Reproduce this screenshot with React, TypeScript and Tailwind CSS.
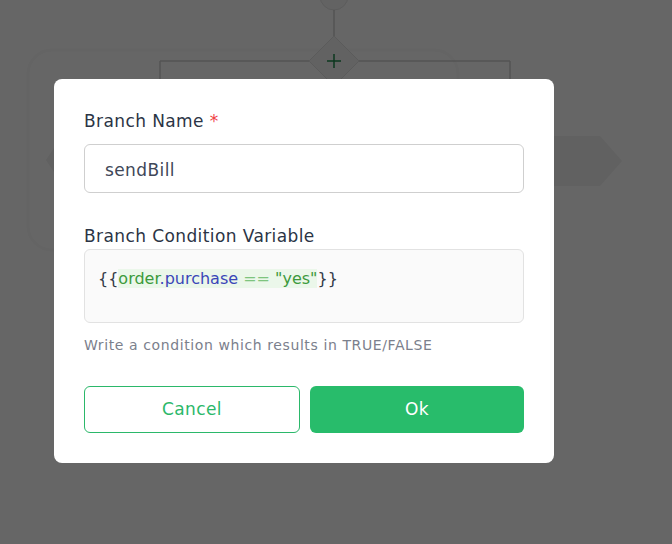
function FlowBackground() {
  return (
    <svg
      className="absolute inset-0"
      width="672"
      height="544"
      viewBox="0 0 672 544"
    >
      <rect width="672" height="544" fill="#ffffff" />
      <rect x="28" y="50" width="430" height="200" rx="24" fill="none" stroke="#fafafa" strokeWidth="3" />
      <circle cx="334" cy="-4" r="14" fill="#f7f7f7" stroke="#e6e6e6" />
      <path d="M334 10 V36" stroke="#cfcfcf" strokeWidth="1.5" />
      <path d="M160 61 H510 M160 61 V100 M510 61 V100" stroke="#cfcfcf" strokeWidth="1.5" fill="none" />
      <path d="M334 36 L359 61 L334 86 L309 61 Z" fill="#f4f4f4" stroke="#e3e3e3" />
      <path d="M334 54 V68 M327 61 H341" stroke="#1f8a4c" strokeWidth="1.5" />
      <path d="M520 136 H600 L622 161 L600 186 H520 Z" fill="#f2f2f2" />
      <path d="M54 148 L46 160 L54 172 Z" fill="#f2f2f2" />
    </svg>
  );
}

export default function App() {
  return (
    <div
      className="relative h-[544px] w-[672px] overflow-hidden"
      style={{ fontFamily: '"DejaVu Sans", "Liberation Sans", sans-serif' }}
    >
      <FlowBackground />
      <div className="absolute inset-0 bg-black/60" />
      <div className="relative pt-[79px] pl-[54px]">
        <div className="w-[500px] rounded-lg bg-white px-[30px] pt-[30px] pb-[30px]">
          <label className="block text-[17px] leading-6 tracking-[0.4px] text-[#2b3445]">
            Branch Name <span className="text-[#ef4444]">*</span>
          </label>
          <div className="mt-[11px] flex h-[49px] w-[440px] items-center rounded-md border border-[#cfcfcf] px-5 pt-[5px] text-[17px] tracking-[0.4px] text-[#404758]">
            sendBill
          </div>

          <label className="mt-[31px] block text-[17px] leading-6 tracking-[0.4px] text-[#2b3445]">
            Branch Condition Variable
          </label>
          <div className="mt-[1px] h-[74px] w-[440px] rounded-md border border-[#e2e2e2] bg-[#fafafa] px-[13px] pt-[17px] text-[16px] leading-6">
            <span className="text-[#333a48]">{"{{"}</span>
            <span className="bg-[#ebf7ea]">
              <span className="text-[#3c9a3c]">order</span>
              <span className="text-[#3a46b8]">.purchase</span>
              <span className="text-[#7ec47e]"> == </span>
              <span className="text-[#3c9a3c]">"yes"</span>
            </span>
            <span className="text-[#333a48]">{"}}"}</span>
          </div>
          <p className="mt-[12px] text-[14px] leading-5 tracking-[0.6px] text-[#7b808c]">
            Write a condition which results in TRUE/FALSE
          </p>

          <div className="mt-[31px] flex gap-[10px]">
            <button
              type="button"
              className="h-[47px] flex-1 rounded-md border border-[#2bb86a] bg-white text-[17px] tracking-[0.4px] text-[#2bb86a]"
            >
              Cancel
            </button>
            <button
              type="button"
              className="h-[47px] flex-1 rounded-md bg-[#28bc6b] text-[17px] tracking-[0.4px] text-white"
            >
              Ok
            </button>
          </div>
        </div>
      </div>
    </div>
  );
}
